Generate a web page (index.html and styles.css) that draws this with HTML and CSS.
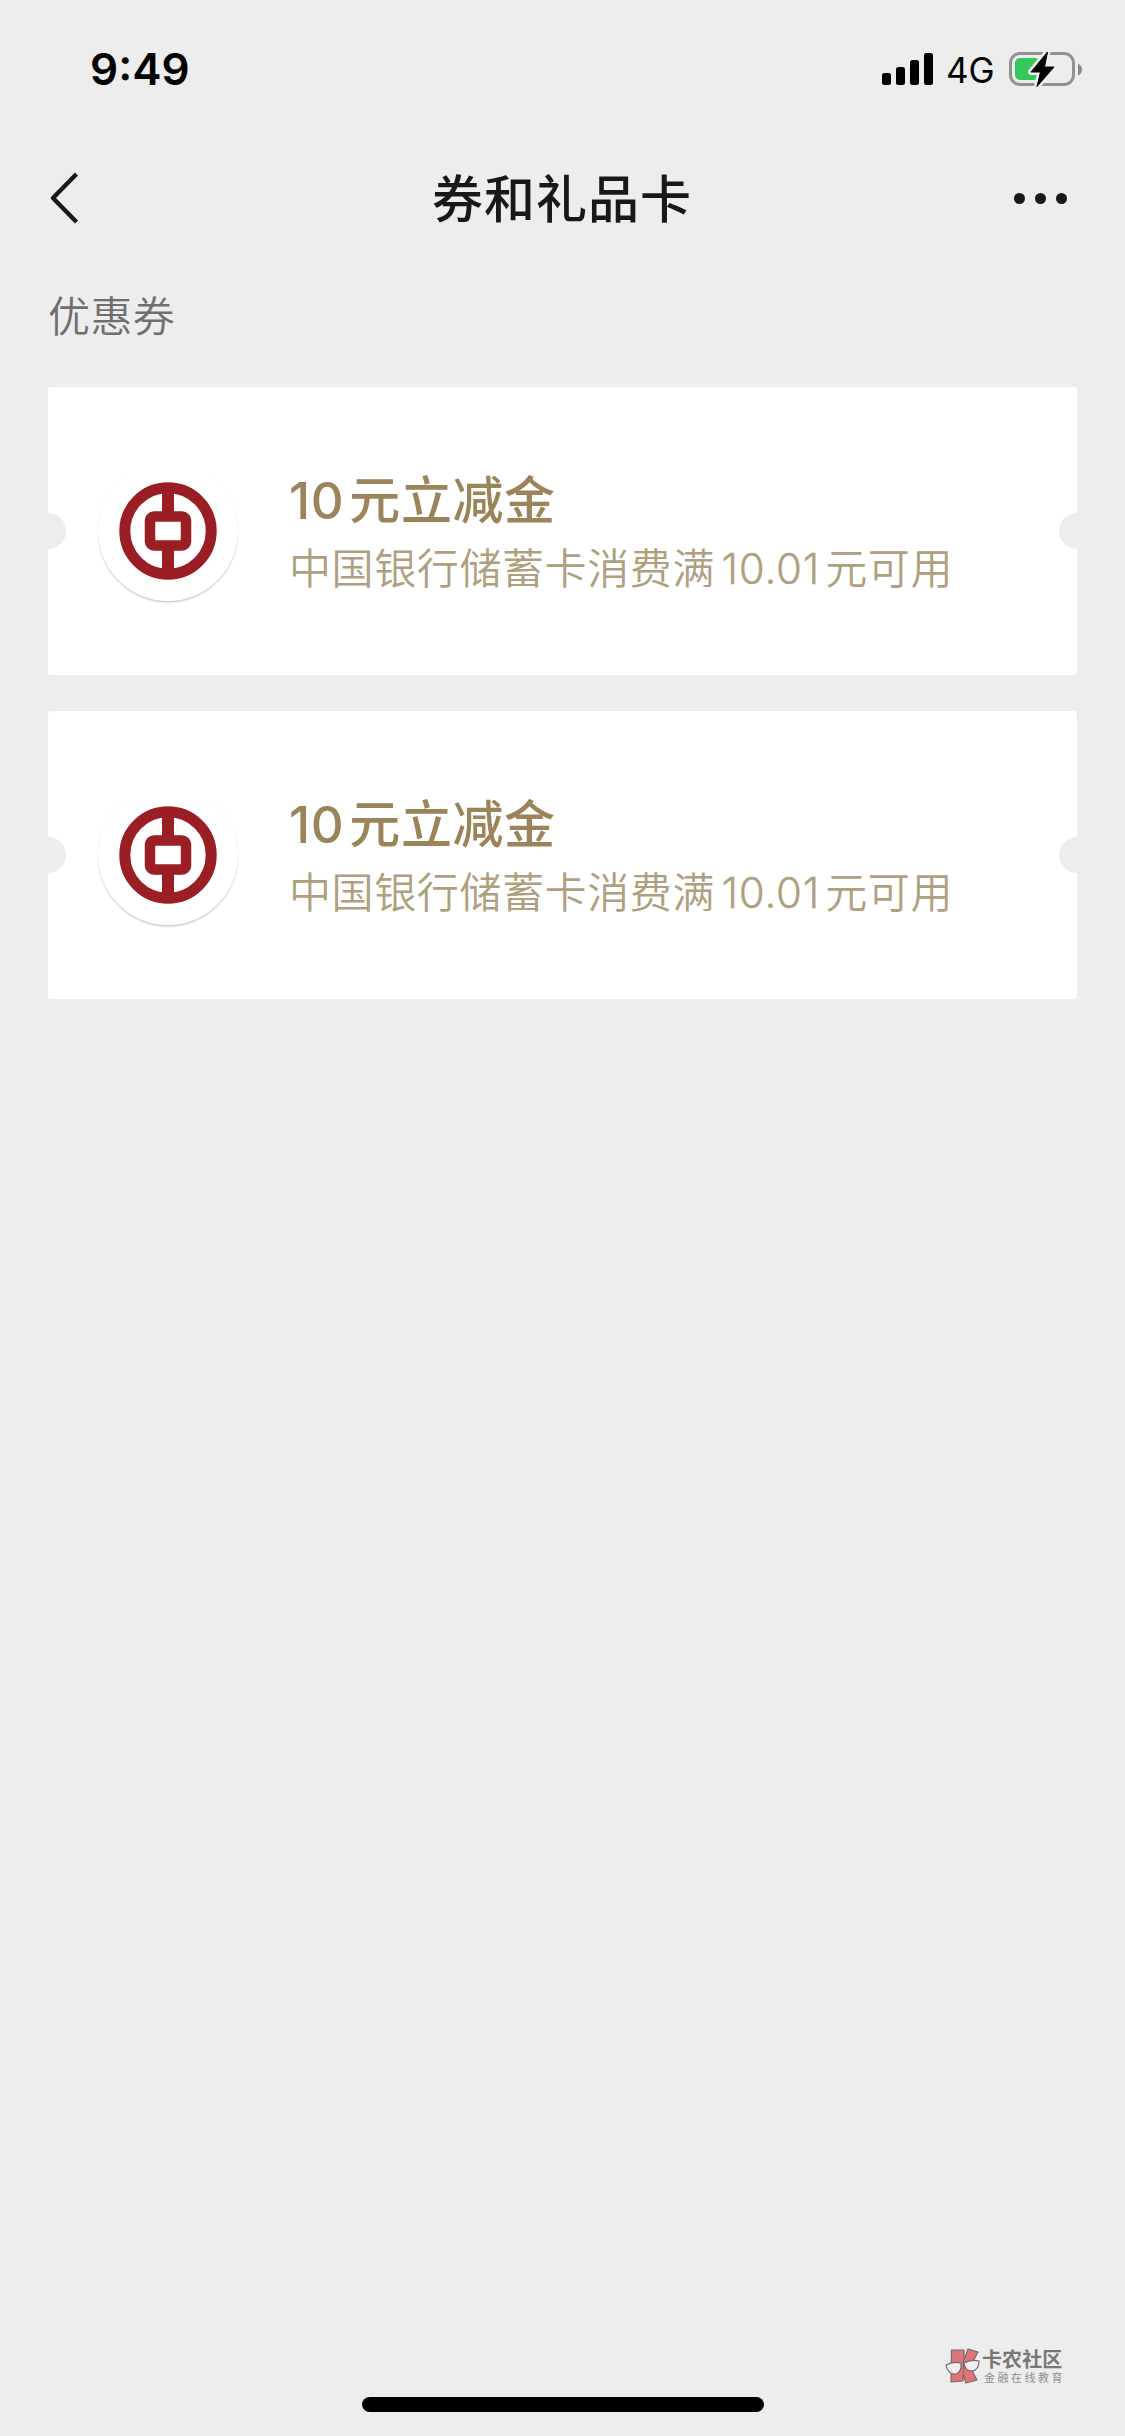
FILE: index.html
```html
<!DOCTYPE html>
<html lang="zh-CN">
<head>
<meta charset="utf-8">
<title>券和礼品卡</title>
<link rel="stylesheet" href="styles.css">
</head>
<body>
<div class="screen">
  <div class="status">
    <span class="time">9:49</span>
    <div class="indicators">
      <svg class="signal" width="51" height="32" viewBox="0 0 51 32">
        <rect x="0" y="20" width="9" height="12" rx="2.5"/>
        <rect x="14" y="14" width="9" height="18" rx="2.5"/>
        <rect x="28" y="7" width="9" height="25" rx="2.5"/>
        <rect x="42" y="0" width="9" height="32" rx="2.5"/>
      </svg>
      <span class="network">4G</span>
      <svg class="battery" width="74" height="38" viewBox="0 0 74 38">
        <rect x="1.5" y="3.5" width="63" height="31" rx="9.5" fill="none" stroke="#919191" stroke-width="3"/>
        <path d="M69 13.5Q73 15.5 73 19.5T69 25.5Z" fill="#8a8a8a"/>
        <rect x="6" y="8" width="25" height="22" rx="5" fill="#34c759"/>
        <path d="M38.5 2L22 22H31.5L28 36.5L45 17H35.5Z" fill="#ededed" stroke="#ededed" stroke-width="6" stroke-linejoin="round"/>
        <path d="M38.5 2L22 22H31.5L28 36.5L45 17H35.5Z" fill="#000" stroke="#000" stroke-width="1" stroke-linejoin="round"/>
      </svg>
    </div>
  </div>
  <header class="nav">
    <svg class="back" width="32" height="54" viewBox="0 0 32 54">
      <path d="M28.5 3L5 27L28.5 51" fill="none" stroke="#181818" stroke-width="4.4" stroke-linejoin="round"/>
    </svg>
    <h1 class="title">券和礼品卡</h1>
    <div class="more"><i class="dot"></i><i class="dot"></i><i class="dot"></i></div>
  </header>
  <main class="content">
    <h2 class="section">优惠券</h2>
    <article class="coupon">
      <div class="logo">
        <svg width="98" height="98" viewBox="0 0 98 98">
          <circle cx="49" cy="49" r="43.2" fill="none" stroke="#9a1e23" stroke-width="11"/>
          <path d="M49 8V32M49 66V90" stroke="#9a1e23" stroke-width="12"/>
          <rect x="31" y="34.5" width="36" height="29" rx="4" fill="none" stroke="#9a1e23" stroke-width="10.5"/>
        </svg>
      </div>
      <div class="info">
        <h3 class="amount"><span class="num">10</span>元立减金</h3>
        <p class="rule">中国银行储蓄卡消费满<span class="decimal">10.01</span>元可用</p>
      </div>
    </article>
    <article class="coupon">
      <div class="logo">
        <svg width="98" height="98" viewBox="0 0 98 98">
          <circle cx="49" cy="49" r="43.2" fill="none" stroke="#9a1e23" stroke-width="11"/>
          <path d="M49 8V32M49 66V90" stroke="#9a1e23" stroke-width="12"/>
          <rect x="31" y="34.5" width="36" height="29" rx="4" fill="none" stroke="#9a1e23" stroke-width="10.5"/>
        </svg>
      </div>
      <div class="info">
        <h3 class="amount"><span class="num">10</span>元立减金</h3>
        <p class="rule">中国银行储蓄卡消费满<span class="decimal">10.01</span>元可用</p>
      </div>
    </article>
  </main>
  <footer class="footer">
    <div class="brand">
      <svg width="36" height="36" viewBox="0 0 36 36">
        <path d="M6.5 2H19V12L23 1L33 4L25 19L32 32L21 35L18 26V33L6 34Z" fill="#e27478" stroke="#716b6c" stroke-width="1.2" stroke-linejoin="round"/>
        <path d="M18.5 12V25" stroke="#716b6c"/>
        <path d="M1 17Q8 13 16 15Q17 24 11 26Q3 27 1 17ZM19 15Q26 11 34 13Q34 22 27 23Q20 23 19 15Z" fill="#f0eeee" stroke="#716b6c" stroke-width="1.2"/>
      </svg>
      <div class="brand-text">
        <span class="brand-name">卡农社区</span>
        <span class="brand-sub">金融在线教育</span>
      </div>
    </div>
    <div class="home"></div>
  </footer>
</div>
</body>
</html>
```
FILE: styles.css
```css
* { box-sizing: border-box; margin: 0; padding: 0; }
body {
  background: #ededed;
  font-family: Inter, "Noto Sans CJK SC", sans-serif;
}
svg { display: block; }
.screen {
  width: 1125px;
  height: 2436px;
  display: flex;
  flex-direction: column;
  background: #ededed;
}
.status {
  height: 138px;
  padding: 0 42px 0 90px;
  display: flex;
  justify-content: space-between;
}
.time {
  margin-top: 39px;
  font-size: 44px;
  line-height: 60px;
  font-weight: 600;
  color: #000;
}
.indicators { display: flex; align-items: flex-start; }
.signal { margin-top: 53px; }
.network {
  width: 48px;
  margin: 49px 15px 0 13px;
  font-size: 35px;
  line-height: 42px;
  white-space: nowrap;
}
.battery { margin-top: 50px; }
.nav {
  height: 120px;
  padding: 0 57px 0 48px;
  display: grid;
  grid-template-columns: 60px 1fr 54px;
  align-items: center;
}
.title {
  padding: 3px 0 0 2px;
  font-size: 51px;
  line-height: 60px;
  font-weight: 500;
  letter-spacing: 1px;
  text-align: center;
  color: #181818;
}
.more { display: flex; gap: 10px; }
.dot { width: 11px; height: 11px; border-radius: 50%; background: #181818; }
.content {
  flex: 1;
  padding: 29px 48px 0;
  display: flex;
  flex-direction: column;
  gap: 36px;
}
.section {
  height: 64px;
  font-size: 42px;
  line-height: 60px;
  font-weight: 350;
  letter-spacing: .4px;
  color: #6f6f6f;
}
.coupon {
  height: 288px;
  flex: none;
  padding-left: 50px;
  display: flex;
  align-items: flex-start;
  gap: 51px;
  border-radius: 3px;
  background:
    radial-gradient(circle at 0 144px, #ededed 17.5px, transparent 18.5px),
    radial-gradient(circle at 100% 144px, #ededed 17.5px, transparent 18.5px),
    #fff;
}
.logo {
  width: 140px;
  height: 140px;
  margin-top: 74px;
  display: grid;
  place-items: center;
  border-radius: 50%;
  background: #fff;
  box-shadow: 0 1.5px 1.5px rgba(0, 0, 0, .2);
}
.info { padding-top: 84px; white-space: nowrap; }
.amount {
  font-size: 51px;
  line-height: 60px;
  font-weight: 500;
  letter-spacing: .6px;
  color: #9b8459;
}
.num { margin-right: 5px; }
.rule {
  margin-top: 8px;
  font-size: 42px;
  line-height: 60px;
  font-weight: 350;
  letter-spacing: .6px;
  color: #af9f7e;
}
.decimal { margin: 0 5px 0 6.5px; letter-spacing: .8px; -webkit-text-stroke: .3px currentColor; }
.footer {
  height: 90px;
  display: flex;
  flex-direction: column;
  justify-content: space-between;
  padding-bottom: 24px;
}
.brand { margin-left: 945px; display: flex; gap: 1px; margin-top: 2px; }
.brand-text { display: flex; flex-direction: column; }
.brand-name { font-size: 20px; line-height: 24px; font-weight: 700; color: #777; letter-spacing: .1px; }
.brand-sub { padding-left: 2px; font-size: 11px; line-height: 13px; letter-spacing: 2.5px; color: #8f8f8f; }
.home {
  width: 402px;
  height: 15px;
  margin-left: 362px;
  border-radius: 8px;
  background: #000;
}
```
